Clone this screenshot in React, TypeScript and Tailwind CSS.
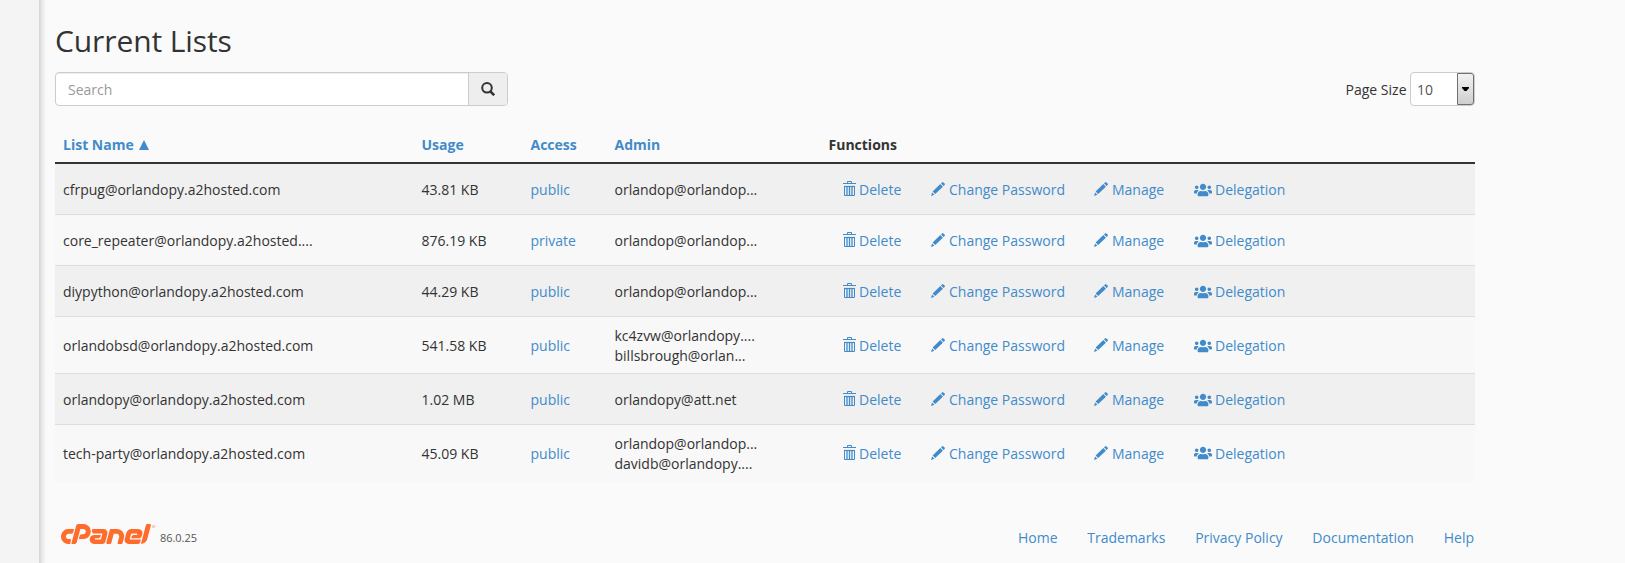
import React from "react";
import { FaUsers } from "react-icons/fa";
import { SiCpanel } from "react-icons/si";

type Row = { name: string; usage: string; access: string; admins: string[] };

const rows: Row[] = [
  { name: "cfrpug@orlandopy.a2hosted.com", usage: "43.81 KB", access: "public", admins: ["orlandop@orlandop..."] },
  { name: "core_repeater@orlandopy.a2hosted....", usage: "876.19 KB", access: "private", admins: ["orlandop@orlandop..."] },
  { name: "diypython@orlandopy.a2hosted.com", usage: "44.29 KB", access: "public", admins: ["orlandop@orlandop..."] },
  { name: "orlandobsd@orlandopy.a2hosted.com", usage: "541.58 KB", access: "public", admins: ["kc4zvw@orlandopy....", "billsbrough@orlan..."] },
  { name: "orlandopy@orlandopy.a2hosted.com", usage: "1.02 MB", access: "public", admins: ["orlandopy@att.net"] },
  { name: "tech-party@orlandopy.a2hosted.com", usage: "45.09 KB", access: "public", admins: ["orlandop@orlandop...", "davidb@orlandopy...."] },
];

const columns = "grid grid-cols-[358.5px_109px_84px_214px_1fr] pl-2";

function TrashIcon() {
  return (
    <svg className="-mt-[3px] h-[15px] w-[13px] shrink-0" viewBox="0 0 13 15" fill="none" stroke="currentColor">
      <path d="M0 2.5h13M4.5 2V.5h4V2M1.5 5v9.5h10V5" />
      <path d="M1 5.5h11" strokeWidth="1.2" />
      <path d="M4 5v9M6.5 5v9M9 5v9" strokeWidth="1.3" />
    </svg>
  );
}

function PencilIcon() {
  return (
    <svg className="-mt-[2px] h-[14px] w-[14px] shrink-0" viewBox="0 0 14 14" fill="currentColor">
      <path d="M11 .4a1 1 0 0 1 1.4 0l1.2 1.2a1 1 0 0 1 0 1.4l-1 1L10 1.4zM9.3 2.1l2.6 2.6-7.7 7.4-2.6-2.6zM1.1 10.4l2.3 2.4L0 14z" />
    </svg>
  );
}

function SearchIcon() {
  return (
    <svg className="h-[14px] w-[14px]" viewBox="0 0 14 14" fill="none" stroke="#333" strokeWidth="2">
      <circle cx="6" cy="5.8" r="4.8" />
      <path d="M9.3 9.3l3.9 3.9" strokeWidth="2.6" />
    </svg>
  );
}

function Functions() {
  return (
    <div className="flex items-center pl-[14.5px] text-[#428bca]">
      <a className="flex w-[88px] items-center gap-[3px]"><TrashIcon />Delete</a>
      <a className="flex w-[163px] items-center gap-1"><PencilIcon />Change Password</a>
      <a className="flex w-[100px] items-center gap-1"><PencilIcon />Manage</a>
      <a className="flex items-center gap-[3px]"><FaUsers className="-mt-px h-[18px] w-[18px]" />Delegation</a>
    </div>
  );
}

export default function App() {
  return (
    <div className="flex h-[563px] overflow-hidden bg-[#fafafa] font-['Open_Sans',sans-serif] text-sm leading-5 text-[#333]">
      <aside className="w-[39px] shrink-0 bg-[#f4f4f4]" />
      <div className="w-[7px] shrink-0 bg-linear-to-r from-[#d4d4d4] via-[#ebebeb] to-[#fafafa]" />
      <main className="ml-[9px] w-[1420px] pt-[24px]">
        <h1 className="h-[48px] text-[30px] leading-[33px] tracking-[-0.1px]">Current Lists</h1>
        <div className="flex h-[34px] items-center justify-between">
          <div className="flex h-full w-[453px] overflow-hidden rounded border border-[#ccc] bg-white">
            <input className="min-w-0 flex-1 px-3 pt-[2px] shadow-[inset_0_1px_1px_rgba(0,0,0,0.075)] outline-none placeholder:text-[#999]" placeholder="Search" />
            <button className="flex w-[39px] items-center justify-center border-l border-[#ccc] bg-[#eee]"><SearchIcon /></button>
          </div>
          <div className="flex h-full items-center gap-[3.5px]">
            <span className="pt-[2px]">Page Size</span>
            <div className="flex h-full w-[65px] justify-between rounded border border-[#ccc] bg-white text-[#555]">
              <span className="pt-[7px] pl-[6px]">10</span>
              <span className="flex w-[17px] items-center justify-center rounded-r-[3px] border border-[#707070] bg-linear-to-b from-[#f2f2f2] to-[#cfcfcf]">
                <svg className="h-1 w-[7px]" viewBox="0 0 7 4"><path d="M0 0h7v1L4.5 4h-2L0 1z" fill="#000" /></svg>
              </span>
            </div>
          </div>
        </div>

        <div className="mt-[20px]">
          <div className={`${columns} h-[38px] border-b-2 border-[#333] pt-[9px] font-bold text-[#428bca]`}>
            <span className="flex h-5 items-center gap-[5px]">
              List Name
              <svg className="h-[10px] w-[10px]" viewBox="0 0 10 10"><path d="M5 0l5 10H0z" fill="currentColor" /></svg>
            </span>
            <span>Usage</span>
            <span>Access</span>
            <span>Admin</span>
            <span className="text-[#333]">Functions</span>
          </div>
          <div>
            {rows.map((r) => (
              <div
                key={r.name}
                className={`${columns} items-center border-b border-[#ddd] pt-[2px] odd:bg-[#f0f0f0] even:bg-[#f8f8f8] last:border-b-0 last:pt-0 ${r.admins.length > 1 ? "h-[57px]" : "h-[51px]"}`}
              >
                <span>{r.name}</span>
                <span>{r.usage}</span>
                <span className="text-[#428bca]">{r.access}</span>
                <div>{r.admins.map((a) => <div key={a}>{a}</div>)}</div>
                <Functions />
              </div>
            ))}
          </div>
        </div>

        <footer className="mt-[40px] flex items-start justify-between pr-px pl-[6px]">
          <div className="flex items-start">
            <div className="mt-[2px] flex h-5 w-[90px] items-center justify-center">
              <SiCpanel className="h-[90px] w-[90px] shrink-0 text-[#ff6c2c]" />
            </div>
            <svg className="mt-[3px] ml-px h-[3px] w-[3px]" viewBox="0 0 3 3" fill="none" stroke="#ff6c2c" strokeOpacity="0.5">
              <circle cx="1.5" cy="1.5" r="1" />
            </svg>
            <span className="mt-[6px] ml-[5px] text-[11px] tracking-[-0.05px] text-[#555]">86.0.25</span>
          </div>
          <nav className="mt-[6px] flex gap-[29.75px] text-[#428bca]">
            <a>Home</a>
            <a>Trademarks</a>
            <a>Privacy Policy</a>
            <a>Documentation</a>
            <a>Help</a>
          </nav>
        </footer>
      </main>
    </div>
  );
}
